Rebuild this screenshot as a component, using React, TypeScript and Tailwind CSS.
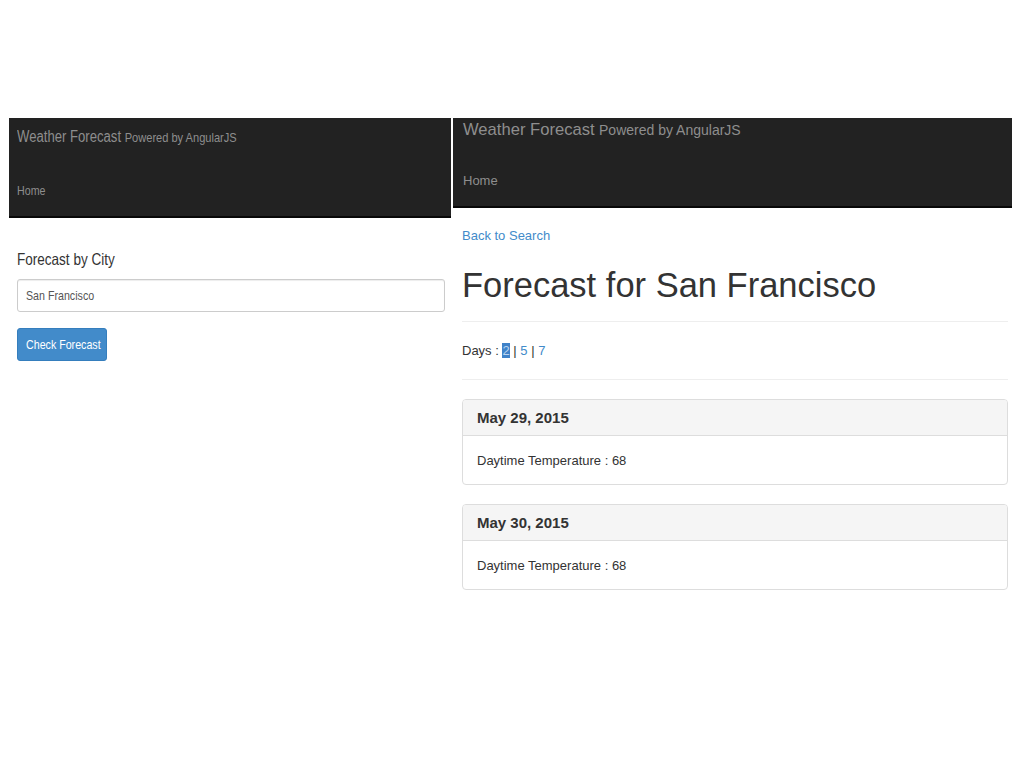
import React from "react";

function N({ children, className }: { children: React.ReactNode; className?: string }) {
  return (
    <span className={"inline-block origin-left scale-x-[0.82] whitespace-nowrap " + (className ?? "")}>
      {children}
    </span>
  );
}

function LeftPanel() {
  return (
    <div className="w-[442px] shrink-0" style={{ fontFamily: '"Liberation Sans", Arial, sans-serif' }}>
      <div className="h-[100px] bg-[#222222] border-b-2 border-[#080808] pl-2">
        <div className="pt-[9px] leading-[20px] text-[#8e8e8e]">
          <N>
            <span className="text-[16px]">Weather Forecast</span>{" "}
            <span className="text-[13.5px]">Powered by AngularJS</span>
          </N>
        </div>
        <div className="mt-[33px] leading-[20px] text-[13px] text-[#8e8e8e]">
          <N>Home</N>
        </div>
      </div>
      <div className="pl-2 pr-[6px]">
        <div className="mt-[31px] leading-[20px] text-[16.5px] text-[#333]">
          <N>Forecast by City</N>
        </div>
        <div className="mt-[10px] h-[33px] rounded-[3px] border border-[#cccccc] shadow-[inset_0_1px_1px_rgba(0,0,0,0.075)] flex items-center pl-[8px] text-[13px] text-[#555]">
          <N>San Francisco</N>
        </div>
        <button className="mt-[16px] h-[33px] w-[90px] rounded-[3px] bg-[#428bca] border border-[#357ebd] text-white text-[13px] flex items-center pl-[8px]">
          <N>Check Forecast</N>
        </button>
      </div>
    </div>
  );
}

function DayPanel({ date, temp, className }: { date: string; temp: string; className?: string }) {
  return (
    <div className={"border border-[#dddddd] rounded-[4px] overflow-hidden " + (className ?? "")}>
      <div className="h-[36px] bg-[#f5f5f5] border-b border-[#dddddd] pl-[14px] flex items-center pt-[2px] text-[15px] font-bold text-[#333]">
        {date}
      </div>
      <div className="h-[48px] pl-[14px] flex items-center pt-[2px] text-[13px] text-[#333]">
        Daytime Temperature : {temp}
      </div>
    </div>
  );
}

function RightPanel() {
  return (
    <div className="w-[559px] shrink-0" style={{ fontFamily: '"Liberation Sans", Arial, sans-serif' }}>
      <div className="h-[90px] bg-[#222222] border-b-2 border-[#080808] pl-[10px]">
        <div className="pt-[2px] leading-[20px] text-[#8e8e8e] whitespace-nowrap">
          <span className="text-[16.6px]">Weather Forecast</span>{" "}
          <span className="text-[14px]">Powered by AngularJS</span>
        </div>
        <div className="mt-[31px] leading-[20px] text-[13px] text-[#8e8e8e]">Home</div>
      </div>
      <div className="pl-[9px] pr-[4px]">
        <div className="mt-[18px] leading-[20px] text-[13px] text-[#428bca]">Back to Search</div>
        <h1 className="mt-[19px] leading-[40px] text-[34.5px] text-[#333]">Forecast for San Francisco</h1>
        <div className="mt-[16px] border-t border-[#eeeeee]" />
        <div className="mt-[19px] leading-[20px] text-[13px] text-[#333]">
          Days : <span className="bg-[#3f82c8] text-[#b9d3ef]">2</span> |{" "}
          <span className="text-[#428bca]">5</span> | <span className="text-[#428bca]">7</span>
        </div>
        <div className="mt-[18px] border-t border-[#eeeeee]" />
        <DayPanel className="mt-[19px]" date="May 29, 2015" temp="68" />
        <DayPanel className="mt-[19px]" date="May 30, 2015" temp="68" />
      </div>
    </div>
  );
}

export default function App() {
  return (
    <div className="w-[1024px] h-[768px] bg-white overflow-hidden">
      <div className="pt-[118px] pl-[9px] flex gap-[2px]">
        <LeftPanel />
        <RightPanel />
      </div>
    </div>
  );
}
